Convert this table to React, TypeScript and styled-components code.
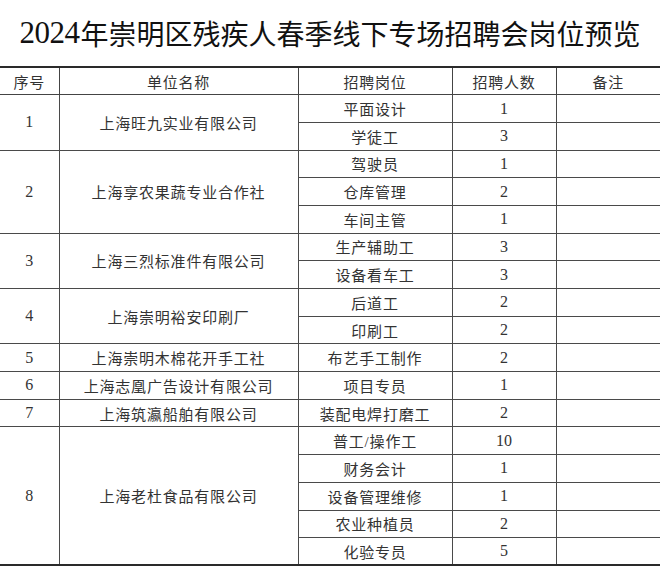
import React from "react";
import styled, { createGlobalStyle } from "styled-components";

const Global = createGlobalStyle`
  html, body { margin: 0; padding: 0; background: #fff; }
  body { font-family: "Liberation Serif", "Noto Sans CJK SC", serif; color: #222; }
`;

const Page = styled.div`
  width: 660px;
  display: flex;
  flex-direction: column;
`;

const Title = styled.h1`
  margin: 0;
  height: 66px;
  display: flex;
  align-items: center;
  justify-content: center;
  padding-bottom: 1px;
  box-sizing: border-box;
  font-size: 28px;
  font-weight: 400;
  letter-spacing: 0;
  color: #111;
  font-family: "Liberation Serif", "Noto Sans CJK SC", serif;
`;

const Year = styled.span`
  font-size: 31px;
  letter-spacing: -0.5px;
  margin-right: 1px;
`;

const Table = styled.table`
  width: 660px;
  border-collapse: collapse;
  table-layout: fixed;
  border-top: 2px solid #2a2a2a;
  border-bottom: 2px solid #2a2a2a;
`;

const Row = styled.tr`
  height: 27.7px;
`;

const HeadCell = styled.th<{ $first?: boolean; $last?: boolean }>`
  font-weight: normal;
  font-size: 15px;
  letter-spacing: 0.8px;
  color: #333;
  text-align: center;
  vertical-align: middle;
  padding: 0;
  border: 1px solid #444;
  border-top: none;
  ${(p) => (p.$first ? "border-left: none;" : "")}
  ${(p) => (p.$last ? "border-right: none;" : "")}
`;

const Cell = styled.td<{ $first?: boolean; $last?: boolean; $num?: boolean }>`
  font-size: ${(p) => (p.$num ? "16px" : "15px")};
  letter-spacing: ${(p) => (p.$num ? "0" : "0.8px")};
  color: #333;
  text-align: center;
  vertical-align: middle;
  padding: 0;
  border: 1px solid #4a4a4a;
  white-space: nowrap;
  ${(p) => (p.$first ? "border-left: none;" : "")}
  ${(p) => (p.$last ? "border-right: none;" : "")}
`;

type Job = [string, string];
type Unit = { no: string; name: string; jobs: Job[] };

const data: Unit[] = [
  { no: "1", name: "上海旺九实业有限公司", jobs: [["平面设计", "1"], ["学徒工", "3"]] },
  { no: "2", name: "上海享农果蔬专业合作社", jobs: [["驾驶员", "1"], ["仓库管理", "2"], ["车间主管", "1"]] },
  { no: "3", name: "上海三烈标准件有限公司", jobs: [["生产辅助工", "3"], ["设备看车工", "3"]] },
  { no: "4", name: "上海崇明裕安印刷厂", jobs: [["后道工", "2"], ["印刷工", "2"]] },
  { no: "5", name: "上海崇明木棉花开手工社", jobs: [["布艺手工制作", "2"]] },
  { no: "6", name: "上海志凰广告设计有限公司", jobs: [["项目专员", "1"]] },
  { no: "7", name: "上海筑瀛船舶有限公司", jobs: [["装配电焊打磨工", "2"]] },
  {
    no: "8",
    name: "上海老杜食品有限公司",
    jobs: [["普工/操作工", "10"], ["财务会计", "1"], ["设备管理维修", "1"], ["农业种植员", "2"], ["化验专员", "5"]],
  },
];

export default function App() {
  return (
    <Page>
      <Global />
      <Title>
        <Year>2024</Year>年崇明区残疾人春季线下专场招聘会岗位预览
      </Title>
      <Table>
        <colgroup>
          <col style={{ width: 59 }} />
          <col style={{ width: 239 }} />
          <col style={{ width: 154 }} />
          <col style={{ width: 104 }} />
          <col style={{ width: 104 }} />
        </colgroup>
        <thead>
          <Row>
            <HeadCell $first>序号</HeadCell>
            <HeadCell>单位名称</HeadCell>
            <HeadCell>招聘岗位</HeadCell>
            <HeadCell>招聘人数</HeadCell>
            <HeadCell $last>备注</HeadCell>
          </Row>
        </thead>
        <tbody>
          {data.map((u) =>
            u.jobs.map((j, i) => (
              <Row key={u.no + "-" + i}>
                {i === 0 && (
                  <>
                    <Cell $first $num rowSpan={u.jobs.length}>{u.no}</Cell>
                    <Cell rowSpan={u.jobs.length}>{u.name}</Cell>
                  </>
                )}
                <Cell>{j[0]}</Cell>
                <Cell $num>{j[1]}</Cell>
                <Cell $last></Cell>
              </Row>
            ))
          )}
        </tbody>
      </Table>
    </Page>
  );
}
